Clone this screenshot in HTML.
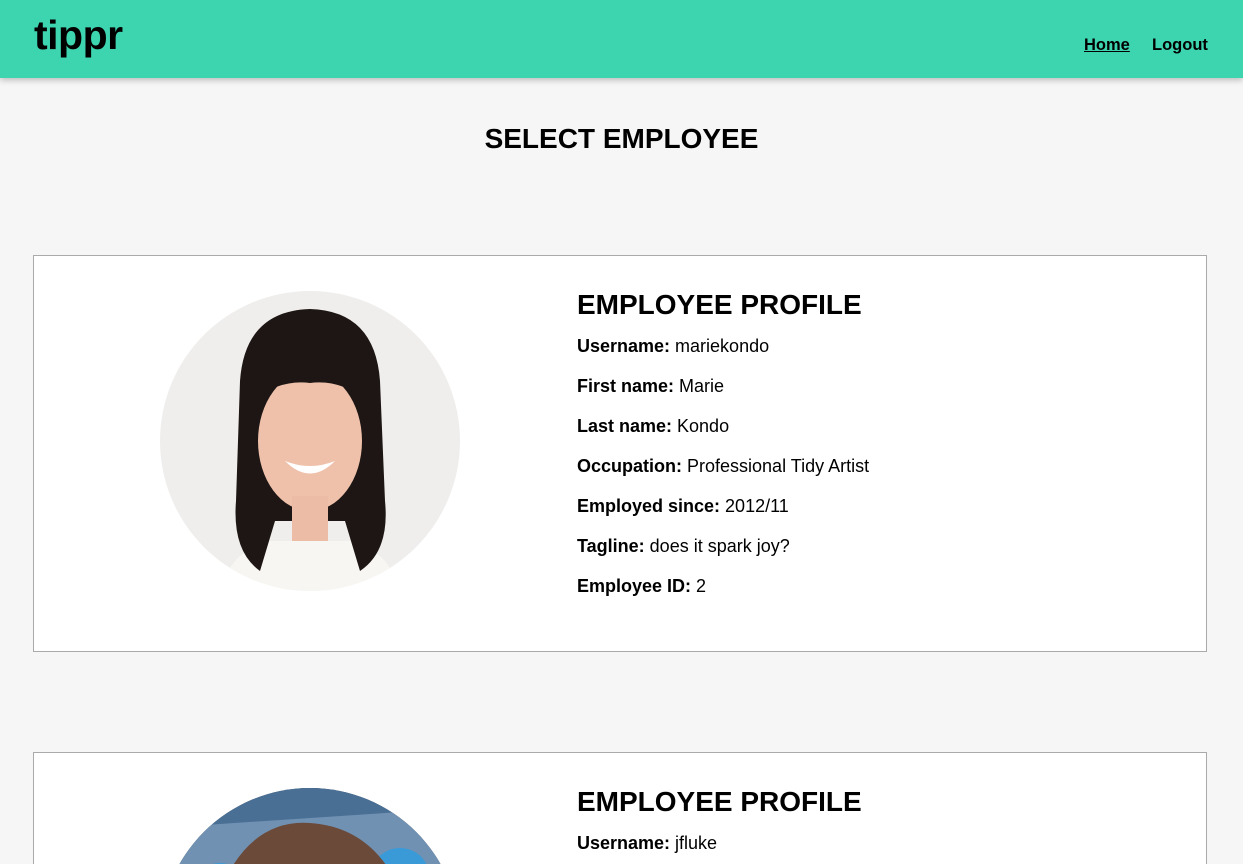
<!DOCTYPE html>
<html><head><style>
*{margin:0;padding:0;box-sizing:border-box}
html,body{width:1243px;height:864px;overflow:hidden}
body{background:#f6f6f6;font-family:"Liberation Sans",sans-serif;color:#000;position:relative}
.hdr{position:absolute;left:0;top:0;width:1243px;height:78px;background:#3dd4b0;box-shadow:0 2px 6px rgba(0,0,0,.25)}
.logo{position:absolute;left:34px;top:12px;font-size:41px;font-weight:bold;letter-spacing:-0.5px}
.nav{position:absolute;top:36px;font-size:16.5px;font-weight:bold}
h1{position:absolute;left:0;width:1243px;top:123px;text-align:center;font-size:28px;font-weight:bold}
.card{position:absolute;left:33px;width:1174px;height:397px;background:#fff;border:1px solid #aaa;overflow:hidden}
.txt{position:absolute;left:543px;top:33px}
.txt h2{font-size:28px;font-weight:bold;margin-bottom:15px}
.txt p{font-size:18px;line-height:20px;margin-bottom:20px}
.circ{position:absolute;left:126px;top:35px;width:300px;height:300px;border-radius:50%;overflow:hidden}
</style></head><body>
<div class="hdr"><div class="logo">tippr</div>
<div class="nav" style="left:1084px;text-decoration:underline">Home</div>
<div class="nav" style="left:1152px">Logout</div></div>
<h1>SELECT EMPLOYEE</h1>
<div class="card" style="top:255px">
<div class="circ" style="background:#efeeec">
<svg width="300" height="300" viewBox="0 0 300 300">
<path d="M60 300 Q70 260 110 250 L190 250 Q230 260 240 300Z" fill="#f7f6f2"/>
<path d="M80 90 Q85 20 150 18 Q215 20 220 90 L225 210 Q230 260 200 280 L185 230 L115 230 L100 280 Q72 260 76 210Z" fill="#1d1614"/>
<ellipse cx="150" cy="150" rx="52" ry="70" fill="#efc1aa"/>
<path d="M92 110 Q100 55 150 50 Q200 55 208 110 Q180 88 150 92 Q120 88 92 110Z" fill="#1d1614"/>
<rect x="132" y="205" width="36" height="45" fill="#ecbca6"/>
<path d="M125 170 Q150 195 175 170 Q150 180 125 170Z" fill="#fff"/>
</svg></div>
<div class="txt"><h2>EMPLOYEE PROFILE</h2>
<p><b>Username:</b> mariekondo</p>
<p><b>First name:</b> Marie</p>
<p><b>Last name:</b> Kondo</p>
<p><b>Occupation:</b> Professional Tidy Artist</p>
<p><b>Employed since:</b> 2012/11</p>
<p><b>Tagline:</b> does it spark joy?</p>
<p><b>Employee ID:</b> 2</p></div>
</div>
<div class="card" style="top:752px;height:112px;border-bottom:none">
<div class="circ" style="background:#2f3a4a">
<svg width="300" height="300" viewBox="0 0 300 300">
<rect x="0" y="0" width="300" height="120" fill="#4a6f95"/>
<path d="M0 40 L300 20 L300 80 L0 90Z" fill="#8aa8c7" opacity=".6"/>
<circle cx="240" cy="90" r="30" fill="#3a9ad8"/>
<circle cx="60" cy="100" r="25" fill="#3a9ad8"/>
<path d="M50 130 Q80 30 150 35 Q225 40 250 130 L250 300 L50 300Z" fill="#6b4a3a"/>
<ellipse cx="150" cy="190" rx="80" ry="90" fill="#e6c4b6"/>
</svg></div>
<div class="txt"><h2>EMPLOYEE PROFILE</h2>
<p><b>Username:</b> jfluke</p></div>
</div>
</body></html>
